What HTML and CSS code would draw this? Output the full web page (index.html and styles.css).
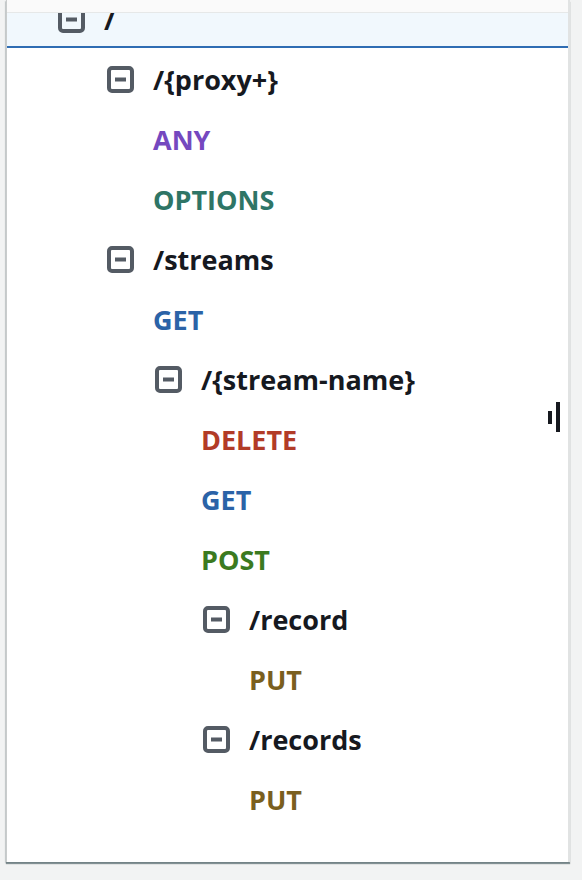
FILE: index.html
```html
<!DOCTYPE html>
<html lang="en">
<head>
<meta charset="utf-8">
<title>Resources</title>
<link rel="stylesheet" href="styles.css">
</head>
<body>
<div class="panel">
  <div class="panel-top"></div>
  <div class="scroller">
    <ul class="tree root">
      <li>
        <div class="row folder selected">
          <span class="toggle"><svg viewBox="0 0 27 27" width="27" height="27"><rect x="2" y="2" width="23" height="23" rx="3" fill="none" stroke="#545b64" stroke-width="4"/><rect x="8" y="11.5" width="11" height="4" fill="#545b64"/></svg></span>
          <span class="label">/</span>
        </div>
        <ul class="tree">
          <li>
            <div class="row folder">
              <span class="toggle"><svg viewBox="0 0 27 27" width="27" height="27"><rect x="2" y="2" width="23" height="23" rx="3" fill="none" stroke="#545b64" stroke-width="4"/><rect x="8" y="11.5" width="11" height="4" fill="#545b64"/></svg></span>
              <span class="label">/{proxy+}</span>
            </div>
            <ul class="tree">
              <li><div class="row method any">ANY</div></li>
              <li><div class="row method options">OPTIONS</div></li>
            </ul>
          </li>
          <li>
            <div class="row folder">
              <span class="toggle"><svg viewBox="0 0 27 27" width="27" height="27"><rect x="2" y="2" width="23" height="23" rx="3" fill="none" stroke="#545b64" stroke-width="4"/><rect x="8" y="11.5" width="11" height="4" fill="#545b64"/></svg></span>
              <span class="label">/streams</span>
            </div>
            <ul class="tree">
              <li><div class="row method get">GET</div></li>
              <li>
                <div class="row folder">
                  <span class="toggle"><svg viewBox="0 0 27 27" width="27" height="27"><rect x="2" y="2" width="23" height="23" rx="3" fill="none" stroke="#545b64" stroke-width="4"/><rect x="8" y="11.5" width="11" height="4" fill="#545b64"/></svg></span>
                  <span class="label">/{stream-name}</span>
                </div>
                <ul class="tree">
                  <li><div class="row method delete">DELETE</div></li>
                  <li><div class="row method get">GET</div></li>
                  <li><div class="row method post">POST</div></li>
                  <li>
                    <div class="row folder">
                      <span class="toggle"><svg viewBox="0 0 27 27" width="27" height="27"><rect x="2" y="2" width="23" height="23" rx="3" fill="none" stroke="#545b64" stroke-width="4"/><rect x="8" y="11.5" width="11" height="4" fill="#545b64"/></svg></span>
                      <span class="label">/record</span>
                    </div>
                    <ul class="tree">
                      <li><div class="row method put">PUT</div></li>
                    </ul>
                  </li>
                  <li>
                    <div class="row folder">
                      <span class="toggle"><svg viewBox="0 0 27 27" width="27" height="27"><rect x="2" y="2" width="23" height="23" rx="3" fill="none" stroke="#545b64" stroke-width="4"/><rect x="8" y="11.5" width="11" height="4" fill="#545b64"/></svg></span>
                      <span class="label">/records</span>
                    </div>
                    <ul class="tree">
                      <li><div class="row method put">PUT</div></li>
                    </ul>
                  </li>
                </ul>
              </li>
            </ul>
          </li>
        </ul>
      </li>
    </ul>
  </div>
  <div class="resize-handle"><span class="bar short"></span><span class="bar tall"></span></div>
</div>
</body>
</html>
```

FILE: styles.css
```css
html, body {
  margin: 0;
  padding: 0;
}
body {
  background: #f2f3f3;
  width: 582px;
  height: 880px;
  overflow: hidden;
  font-family: "Open Sans", "Liberation Sans", sans-serif;
}
.panel {
  position: relative;
  margin-left: 6px;
  width: 564px;
  height: 862px;
  background: #ffffff;
  border-left: 1px solid #c9cccc;
  border-right: 2px solid #e1e3e3;
  box-sizing: border-box;
  box-shadow: 0 2px 1px rgba(0, 28, 36, 0.45), -1px 1px 1px rgba(0, 28, 36, 0.12);
  display: flex;
  flex-direction: column;
}
.panel-top {
  height: 12px;
  background: #fafafa;
  border-bottom: 1px solid #e6e8e8;
  flex: none;
}
.scroller {
  flex: 1;
  overflow: hidden;
}
.tree {
  list-style: none;
  margin: 0;
  padding: 0 0 0 48px;
}
.tree.root {
  padding-left: 0;
  margin-top: -24px;
}
.row {
  height: 60px;
  display: flex;
  align-items: center;
  font-weight: 700;
  font-size: 27px;
  white-space: nowrap;
}
.root > li > .row {
  padding-left: 51px;
}
.root > li > .tree {
  padding-left: 100px;
}
.folder .toggle {
  width: 27px;
  height: 27px;
  flex: none;
  display: block;
}
.folder .toggle svg {
  display: block;
}
.folder .label {
  margin-left: 19px;
  color: #16191f;
}
.selected {
  background: linear-gradient(to bottom, #f1f8fd 0, #f1f8fd 57px, #2f6db3 57px, #2f6db3 59px, transparent 59px);
}
.method {
  margin-left: -2px;
}
.any { color: #7548bf; }
.options { color: #2e7566; }
.get { color: #2b63a7; }
.delete { color: #b23b27; }
.post { color: #3b7a1f; }
.put { color: #7a5f1e; }
.resize-handle {
  position: absolute;
  left: 541px;
  top: 402px;
  display: flex;
  align-items: center;
  gap: 4px;
  height: 30px;
}
.bar {
  display: block;
  width: 4px;
  background: #16191f;
}
.bar.short { height: 13px; }
.bar.tall { height: 30px; }
```
